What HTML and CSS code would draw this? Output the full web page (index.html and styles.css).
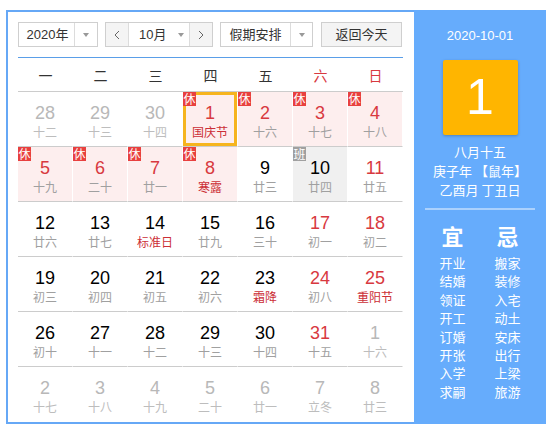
FILE: index.html
```html
<!DOCTYPE html>
<html lang="zh">
<head>
<meta charset="utf-8">
<title>万年历</title>
<link rel="stylesheet" href="styles.css">
</head>
<body>
<div class="cal">
  <div class="main">
    <div class="toolbar">
      <div class="sel sel-year"><span class="sel-text">2020年</span><span class="sel-arrow"><i class="tri"></i></span></div>
      <div class="month-group">
        <span class="nav"><svg width="6" height="10" viewBox="0 0 6 10"><polyline points="5,1 1,5 5,9" fill="none" stroke="#666" stroke-width="1"/></svg></span>
        <span class="month"><span class="sel-text">10月</span><i class="tri"></i></span>
        <span class="nav nav-r"><svg width="6" height="10" viewBox="0 0 6 10"><polyline points="1,1 5,5 1,9" fill="none" stroke="#666" stroke-width="1"/></svg></span>
      </div>
      <div class="sel sel-holiday"><span class="sel-text">假期安排</span><span class="sel-arrow"><i class="tri"></i></span></div>
      <div class="btn-today">返回今天</div>
    </div>
    <div class="rule"></div>
    <div class="week">
      <span>一</span><span>二</span><span>三</span><span>四</span><span>五</span><span class="we">六</span><span class="we">日</span>
    </div>
    <div class="grid">
      <div class="cell other"><b>28</b><em>十二</em></div>
      <div class="cell other"><b>29</b><em>十三</em></div>
      <div class="cell other"><b>30</b><em>十四</em></div>
      <div class="cell rest today"><i class="tag">休</i><b>1</b><em class="fest">国庆节</em></div>
      <div class="cell rest"><i class="tag">休</i><b>2</b><em>十六</em></div>
      <div class="cell rest"><i class="tag">休</i><b>3</b><em>十七</em></div>
      <div class="cell rest"><i class="tag">休</i><b>4</b><em>十八</em></div>

      <div class="cell rest"><i class="tag">休</i><b>5</b><em>十九</em></div>
      <div class="cell rest"><i class="tag">休</i><b>6</b><em>二十</em></div>
      <div class="cell rest"><i class="tag">休</i><b>7</b><em>廿一</em></div>
      <div class="cell rest"><i class="tag">休</i><b>8</b><em class="fest">寒露</em></div>
      <div class="cell"><b>9</b><em>廿三</em></div>
      <div class="cell work"><i class="tag tag-work">班</i><b>10</b><em>廿四</em></div>
      <div class="cell wkend"><b>11</b><em>廿五</em></div>

      <div class="cell"><b>12</b><em>廿六</em></div>
      <div class="cell"><b>13</b><em>廿七</em></div>
      <div class="cell"><b>14</b><em class="fest">标准日</em></div>
      <div class="cell"><b>15</b><em>廿九</em></div>
      <div class="cell"><b>16</b><em>三十</em></div>
      <div class="cell wkend"><b>17</b><em>初一</em></div>
      <div class="cell wkend"><b>18</b><em>初二</em></div>

      <div class="cell"><b>19</b><em>初三</em></div>
      <div class="cell"><b>20</b><em>初四</em></div>
      <div class="cell"><b>21</b><em>初五</em></div>
      <div class="cell"><b>22</b><em>初六</em></div>
      <div class="cell"><b>23</b><em class="fest">霜降</em></div>
      <div class="cell wkend"><b>24</b><em>初八</em></div>
      <div class="cell wkend"><b>25</b><em class="fest">重阳节</em></div>

      <div class="cell"><b>26</b><em>初十</em></div>
      <div class="cell"><b>27</b><em>十一</em></div>
      <div class="cell"><b>28</b><em>十二</em></div>
      <div class="cell"><b>29</b><em>十三</em></div>
      <div class="cell"><b>30</b><em>十四</em></div>
      <div class="cell wkend"><b>31</b><em>十五</em></div>
      <div class="cell other"><b>1</b><em>十六</em></div>

      <div class="cell other last"><b>2</b><em>十七</em></div>
      <div class="cell other last"><b>3</b><em>十八</em></div>
      <div class="cell other last"><b>4</b><em>十九</em></div>
      <div class="cell other last"><b>5</b><em>二十</em></div>
      <div class="cell other last"><b>6</b><em>廿一</em></div>
      <div class="cell other last"><b>7</b><em>立冬</em></div>
      <div class="cell other last"><b>8</b><em>廿三</em></div>
    </div>
  </div>
  <div class="side">
    <div class="side-date">2020-10-01</div>
    <div class="big-day">1</div>
    <div class="lunar">
      <div>八月十五</div>
      <div>庚子年 【鼠年】</div>
      <div>乙酉月 丁丑日</div>
    </div>
    <div class="side-rule"></div>
    <div class="yiji">
      <div class="col">
        <div class="yj-title">宜</div>
        <div>开业</div><div>结婚</div><div>领证</div><div>开工</div><div>订婚</div><div>开张</div><div>入学</div><div>求嗣</div>
      </div>
      <div class="col">
        <div class="yj-title">忌</div>
        <div>搬家</div><div>装修</div><div>入宅</div><div>动土</div><div>安床</div><div>出行</div><div>上梁</div><div>旅游</div>
      </div>
    </div>
  </div>
</div>
</body>
</html>
```

FILE: styles.css
```css
* { box-sizing: border-box; }
html, body { margin: 0; padding: 0; background: #fff; }
body {
  font-family: "Liberation Sans", "Noto Sans CJK SC", sans-serif;
  color: #333;
}
.cal {
  margin: 10px 0 0 6px;
  width: 540px;
  height: 414px;
  border: 2px solid #66a8f6;
  border-right: 0;
  display: flex;
}
.main {
  width: 406px;
  padding: 10px 0 0 10px;
}
.toolbar {
  display: flex;
  height: 25px;
  font-size: 13px;
  line-height: 23px;
}
.sel, .month-group, .btn-today {
  border: 1px solid #cfcfcf;
  height: 25px;
  display: flex;
  align-items: stretch;
}
.sel-text { color: #333; }
.sel-year { width: 80px; }
.sel-year .sel-text { width: 55px; text-align: center; padding-left: 2px; }
.sel-arrow {
  flex: 1;
  border-left: 1px solid #dcdcdc;
  display: flex;
  align-items: center;
  justify-content: center;
}
.tri {
  display: inline-block;
  width: 0; height: 0;
  border-left: 3px solid transparent;
  border-right: 3px solid transparent;
  border-top: 4px solid #999;
}
.month-group { margin-left: 7px; width: 108px; }
.nav {
  width: 23px;
  background: #f4f4f4;
  display: flex;
  align-items: center;
  justify-content: center;
  border-right: 1px solid #dcdcdc;
}
.nav-r { border-right: 0; border-left: 1px solid #dcdcdc; }
.month {
  flex: 1;
  display: flex;
  align-items: center;
  padding-left: 10px;
  gap: 12px;
}
.sel-holiday { margin-left: 7px; width: 93px; }
.sel-holiday .sel-text { width: 69px; text-align: center; }
.btn-today {
  margin-left: 8px;
  width: 81px;
  background: #f4f4f4;
  justify-content: center;
  color: #333;
}
.rule {
  margin-top: 10px;
  width: 385px;
  height: 1px;
  background: #5a9ee8;
}
.week {
  display: grid;
  grid-template-columns: repeat(7, 55px);
  height: 34px;
  border-bottom: 1px solid #cccccc;
  width: 385px;
  font-size: 14px;
  line-height: 34px;
  text-align: center;
  color: #333;
  font-family: "Noto Sans CJK SC", sans-serif;
}
.week .we { color: #d8393f; }
.grid {
  display: grid;
  grid-template-columns: repeat(7, 55px);
  grid-auto-rows: 55px;
  width: 385px;
}
.cell {
  position: relative;
  border-bottom: 1px solid #cccccc;
  border-right: 1px solid #fff;
  text-align: center;
  padding-top: 11px;
}
.cell.last { border-bottom: 0; }
.cell b {
  display: block;
  font-weight: normal;
  font-size: 18px;
  line-height: 20px;
  color: #000;
}
.cell em {
  display: block;
  font-style: normal;
  font-size: 12px;
  line-height: 16px;
  margin-top: 1px;
  color: #a0a0a0;
  font-family: "Noto Sans CJK SC", sans-serif;
}
.cell em.fest { color: #cc2f37; }
.cell.wkend b { color: #d8393f; }
.cell.rest { background: #fdeeee; }
.cell.rest b { color: #d8393f; }
.cell.work { background: #f0f0f0; }
.cell.other b { color: #b8b8b8; }
.cell.other em { color: #bdbdbd; }
.cell.today { box-shadow: inset 0 0 0 3px #f6b41e; }
.tag {
  position: absolute;
  left: 0;
  top: 0;
  width: 13px;
  height: 14px;
  background: #e8403f;
  color: #fff;
  font-style: normal;
  font-size: 12px;
  line-height: 14px;
  text-align: center;
  font-family: "Noto Sans CJK SC", sans-serif;
  z-index: 2;
}
.tag-work { background: #a0a0a0; }
.side {
  width: 132px;
  background: #66acfc;
  color: #fff;
  margin-top: -2px;
  margin-bottom: -2px;
  padding-top: 18px;
  display: flex;
  flex-direction: column;
  align-items: center;
}
.side-date {
  font-size: 13px;
  line-height: 16px;
}
.big-day {
  margin-top: 16px;
  width: 75px;
  height: 75px;
  background: #ffb500;
  box-shadow: 0 1px 3px rgba(0,0,0,0.25);
  border-radius: 2px;
  font-size: 50px;
  line-height: 75px;
  text-align: center;
  color: #fff;
}
.lunar {
  margin-top: 7px;
  font-size: 13px;
  line-height: 19px;
  text-align: center;
  font-family: "Noto Sans CJK SC", sans-serif;
}
.side-rule {
  margin-top: 9px;
  width: 110px;
  height: 2px;
  background: rgba(255,255,255,0.45);
}
.yiji {
  display: flex;
  width: 110px;
  margin-top: 10px;
  font-family: "Noto Sans CJK SC", sans-serif;
  font-size: 13px;
  line-height: 18.4px;
  text-align: center;
}
.col { width: 55px; }
.yj-title {
  font-size: 22px;
  line-height: 30px;
  font-weight: bold;
  margin-bottom: 4px;
}
```
